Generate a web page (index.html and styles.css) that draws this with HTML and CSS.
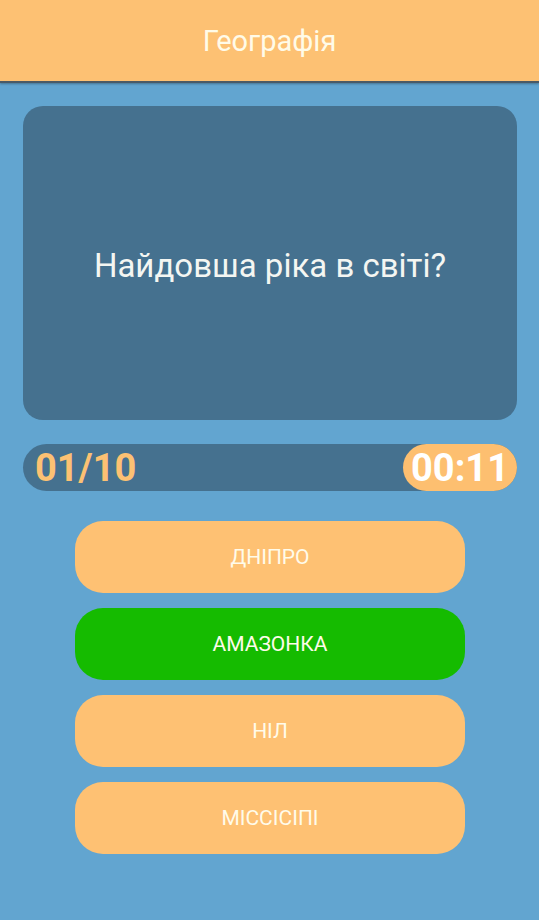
FILE: index.html
```html
<!DOCTYPE html>
<html lang="uk">
<head>
<meta charset="utf-8">
<title>Географія</title>
<link rel="stylesheet" href="styles.css">
</head>
<body>
<header class="topbar">Географія</header>
<main class="content">
  <section class="question-card">
    <p class="question">Найдовша ріка в світі?</p>
  </section>
  <div class="status">
    <span class="counter">01/10</span>
    <span class="timer">00:11</span>
  </div>
  <div class="answers">
    <button class="answer">ДНІПРО</button>
    <button class="answer correct">АМАЗОНКА</button>
    <button class="answer">НІЛ</button>
    <button class="answer">МІССІСІПІ</button>
  </div>
</main>
</body>
</html>
```
FILE: styles.css
```css
* { box-sizing: border-box; }
html, body {
  margin: 0;
  padding: 0;
  height: 100%;
}
body {
  background: #62a5d0;
  font-family: Roboto, "Noto Sans", sans-serif;
}
.topbar {
  height: 83px;
  background: #fdc173;
  color: #fffbe8;
  font-size: 29px;
  display: flex;
  align-items: center;
  justify-content: center;
  border-bottom: 2px solid #4a5a66;
  box-shadow: 0 1px 2px rgba(0,0,0,0.3);
}
.content {
  padding: 23px 22px 0 23px;
  display: flex;
  flex-direction: column;
}
.question-card {
  height: 314px;
  background: #45718f;
  border-radius: 20px;
  display: flex;
  align-items: center;
  justify-content: center;
}
.question {
  margin: 4px 0 0;
  color: #f4f6f2;
  font-size: 33px;
}
.status {
  margin-top: 24px;
  height: 47px;
  background: #45718f;
  border-radius: 24px;
  display: flex;
  align-items: center;
  justify-content: space-between;
  padding-left: 12px;
}
.counter {
  color: #fcc173;
  font-size: 38px;
  font-weight: 700;
}
.timer {
  height: 47px;
  width: 114px;
  background: #fdbf70;
  border-radius: 24px;
  color: #ffffff;
  font-size: 38px;
  font-weight: 700;
  display: flex;
  align-items: center;
  justify-content: center;
}
.answers {
  margin-top: 30px;
  display: flex;
  flex-direction: column;
  align-items: center;
  gap: 15px;
}
.answer {
  width: 390px;
  height: 72px;
  border: none;
  border-radius: 28px;
  background: #fec173;
  color: #fffbea;
  font-family: Roboto, "Noto Sans", sans-serif;
  font-size: 21px;
  padding: 0;
}
.answer.correct {
  background: #15bb00;
}
```
